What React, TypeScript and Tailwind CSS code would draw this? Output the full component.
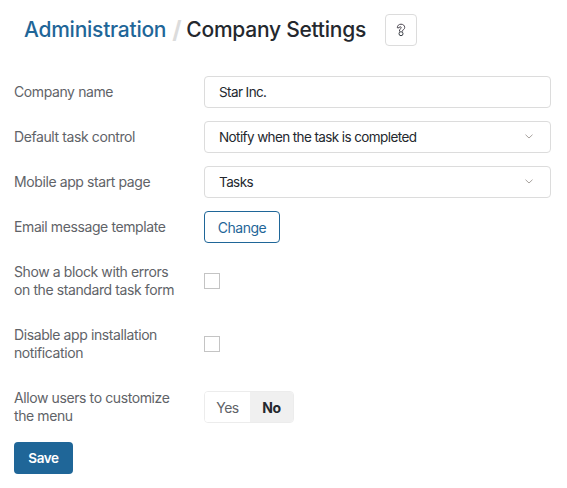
import React from "react";

function Chevron() {
  return (
    <svg width="8" height="5" viewBox="0 0 8 5" fill="none" className="mb-[2px] shrink-0">
      <path d="M.5.7l3.5 3.3L7.500.7" stroke="#a8a29e" strokeWidth="1" />
    </svg>
  );
}

function Row({ label, className, children }: { label: React.ReactNode; className?: string; children: React.ReactNode }) {
  return (
    <div className={"flex items-center " + (className ?? "")}>
      <div className="w-[190px] shrink-0 pr-[20px] text-[14px] leading-[18px] tracking-[-0.4px] text-[#5f6368]">{label}</div>
      {children}
    </div>
  );
}

function Select({ value }: { value: string }) {
  return (
    <div className="flex h-8 w-[347px] items-center justify-between rounded-[4px] border border-[#dcdcdc] bg-white pl-[14px] pr-[17px] text-[13.5px] tracking-[-0.6px] text-[#24282e]">
      <span>{value}</span>
      <Chevron />
    </div>
  );
}

export default function App() {
  return (
    <div className="h-[488px] w-[567px] overflow-hidden bg-white pl-[14px] font-['Inter',sans-serif]">
      <div className="flex h-[76px] items-start pl-[10px] pt-[14px]">
        <div className="flex h-8 items-center text-[21px] font-[550] leading-8 tracking-[-0.25px]">
          <span className="text-[#1f6698]">Administration</span>
          <span className="ml-[6px] text-[24px] font-bold text-[#dcdcdc]">/</span>
          <span className="ml-[5px] text-[#24282e]">Company Settings</span>
        </div>
        <button className="ml-[19px] flex h-8 w-8 items-center justify-center rounded-[4px] border border-[#dcdcdc] bg-white">
          <svg width="10" height="14" viewBox="0 0 10 14" fill="none">
            <path d="M3.500 8.500V7c0-.9 1.700-1.100 1.700-2.300 0-.7-.5-1-1-1-.7 0-1 .5-1.100 1.100H1.300C1.300 2.600 2.800 1.200 5 1.200s3.700 1.400 3.700 3.200c0 1.700-1.200 2.200-2.100 2.900v1.200" stroke="#4b4650" strokeWidth="1" />
            <circle cx="5" cy="10.700" r="2" stroke="#3a3f46" strokeWidth="1" />
          </svg>
        </button>
      </div>
      <Row label="Company name" className="mb-[13px]">
        <div className="flex h-8 w-[347px] items-center rounded-[4px] border border-[#dcdcdc] bg-white pl-[14px] text-[13.5px] tracking-[-0.6px] text-[#24282e]">
          Star Inc.
        </div>
      </Row>
      <Row label="Default task control" className="mb-[13px]">
        <Select value="Notify when the task is completed" />
      </Row>
      <Row label="Mobile app start page" className="mb-[13px]">
        <Select value="Tasks" />
      </Row>
      <Row label="Email message template" className="mb-[20px]">
        <button className="h-8 w-[76px] rounded-[4px] border border-[#1f6698] bg-white text-[14px] tracking-[-0.5px] text-[#1f6698]">Change</button>
      </Row>
      <Row label="Show a block with errors on the standard task form" className="mb-[27px]">
        <div className="h-4 w-4 border border-[#c4c4c4] bg-white" />
      </Row>
      <Row label="Disable app installation notification" className="mb-[27px]">
        <div className="h-4 w-4 border border-[#c4c4c4] bg-white" />
      </Row>
      <Row label="Allow users to customize the menu" className="mb-[17px]">
        <div className="flex h-8 overflow-hidden rounded-[4px] border border-[#ececec] text-[14px] tracking-[-0.5px]">
          <div className="flex w-[45px] items-center justify-center bg-white text-[#5f6368]">Yes</div>
          <div className="flex w-[43px] items-center justify-center bg-[#f0f0f0] font-bold text-[#24282e]">No</div>
        </div>
      </Row>
      <button className="h-8 w-[59px] rounded-[4px] bg-[#1f6698] text-[13.5px] font-semibold tracking-[-0.4px] text-white">Save</button>
    </div>
  );
}
